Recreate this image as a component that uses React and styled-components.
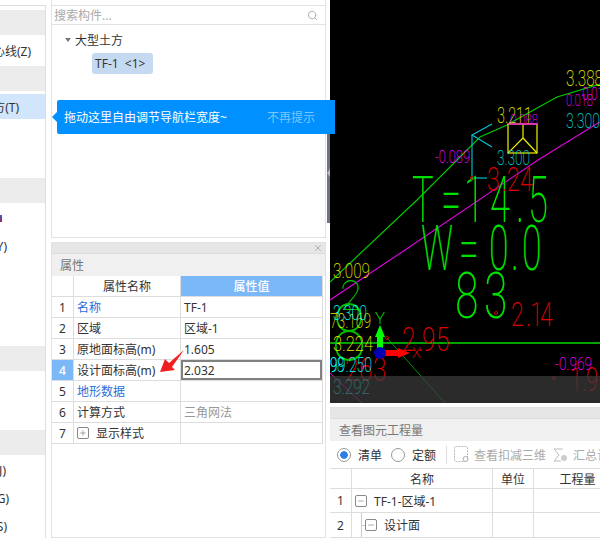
import React from "react";
import styled, { createGlobalStyle } from "styled-components";
import { Search, X, Plus, Minus } from "lucide-react";

const GlobalStyle = createGlobalStyle`
  html, body {
    margin: 0;
    background: #fff;
    overflow: hidden;
  }
  * {
    box-sizing: border-box;
  }
`;

const navRows = [
  { band: true },
  { label: "轴心线(Z)", end: 14 },
  { band: true },
  { label: "大型土方(T)", end: 26, selected: true },
  {},
  {},
  { band: true },
  { mark: true },
  { label: "(Y)", end: 38 },
  {},
  {},
  {},
  { band: true },
  {},
  {},
  { band: true },
  { label: "(J)", end: 39 },
  { label: "(G)", end: 36 },
  { label: "(S)", end: 38 },
];

const propRows = [
  { name: "名称", value: "TF-1", link: true },
  { name: "区域", value: "区域-1" },
  { name: "原地面标高(m)", value: "1.605" },
  { name: "设计面标高(m)", value: "2.032", active: true },
  { name: "地形数据", value: "", link: true },
  { name: "计算方式", value: "三角网法", muted: true },
  { name: "显示样式", value: "", expand: true },
];

// x, baseline y, width, digit height, colour. xs + sx place each character on its own
const cadLabels = [
  { t: "3.388", x: 566, y: 86, w: 37, h: 16, c: "#e6e600" },
  { t: "0.01", x: 582, y: 100, w: 22, h: 13, c: "#ff00ff" },
  { t: "0.018", x: 566, y: 106, w: 27, h: 12, c: "#ff00ff" },
  { t: "3.300", x: 566, y: 128, w: 34, h: 15, c: "#00d8d8" },
  { t: "3.211", x: 497, y: 123, w: 35, h: 16, c: "#e6e600" },
  { t: "0.088", x: 510, y: 125, w: 28, h: 11, c: "#ff00ff" },
  { t: "-0.089", x: 435, y: 163, w: 35, h: 13, c: "#ff00ff" },
  { t: "3.300", x: 497, y: 165, w: 33, h: 15, c: "#00d8d8" },
  { t: "T=14.5", y: 222, h: 46, c: "#00e000", weight: 200, sx: 0.56, xs: [412, 441, 464, 490, 516, 528] },
  { t: "W=0.0", y: 270, h: 45, c: "#00e000", weight: 200, sx: 0.56, xs: [421, 459, 489, 511, 522] },
  { t: "83", y: 318, h: 46, c: "#00e000", weight: 200, sx: 0.66, xs: [455, 484] },
  { t: "3.24", y: 191, h: 24, c: "#e00000", weight: 200, sx: 0.68, xs: [487, 502, 507, 520] },
  { t: "2.14", y: 326, h: 24, c: "#e00000", weight: 200, sx: 0.68, xs: [511, 526, 530, 540] },
  { t: "2.95", y: 351, h: 24, c: "#e00000", weight: 200, sx: 0.72, xs: [402, 418, 422, 436] },
  { t: "263", y: 381, h: 24, c: "#e00000", weight: 200, sx: 0.72, xs: [345, 359, 373] },
  { t: "1.9", y: 391, h: 23, c: "#e00000", weight: 200, sx: 0.68, xs: [570, 582, 586] },
  { t: "-0.969", x: 555, y: 370, w: 37, h: 13, c: "#ff00ff" },
  { t: "3.009", x: 333, y: 278, w: 37, h: 15, c: "#e6e600" },
  { t: "2", x: 340, y: 310, w: 22, h: 30, c: "#00c000", weight: 100 },
  { t: "8", x: 332, y: 360, w: 34, h: 57, c: "#00c000", weight: 100 },
  { t: "73.169", x: 330, y: 328, w: 41, h: 15, c: "#e6e600" },
  { t: "3.300", x: 333, y: 320, w: 34, h: 15, c: "#00ffff" },
  { t: "3.224", x: 333, y: 351, w: 40, h: 15, c: "#e6e600" },
  { t: "98", x: 330, y: 372, w: 14, h: 15, c: "#00ffff" },
  { t: "99.250", x: 330, y: 372, w: 42, h: 15, c: "#00ffff" },
  { t: "3.292", x: 333, y: 394, w: 37, h: 15, c: "#00ffff" },
  { t: "Y", x: 375, y: 324, w: 10, h: 12, c: "#00ff00" },
  { t: "X", x: 412, y: 358, w: 9, h: 10, c: "#ff0000" },
];

function CadLabel({ label }) {
  const { t, x, y, w, h, c, weight, sx, xs } = label;
  if (xs) {
    return (
      <CadText
        transform={`scale(${sx} 1)`}
        x={xs.map((v) => v / sx).join(" ")}
        y={y}
        $size={h / 0.71}
        $weight={weight}
        fill={c}
      >
        {t}
      </CadText>
    );
  }
  return (
    <CadText
      x={x}
      y={y}
      $size={h / 0.71}
      $weight={weight}
      fill={c}
      textLength={w}
      lengthAdjust="spacingAndGlyphs"
    >
      {t}
    </CadText>
  );
}

function CadDrawing() {
  return (
    <CadSvg viewBox="330 0 270 403">
      <polyline points="330,282 417,200 480,137 507,125 530,112 557,97 600,84" fill="none" stroke="#00c800" strokeWidth="1.2" />
      <polyline points="330,300 405,250 538,160 598,123 600,122" fill="none" stroke="#e000e0" strokeWidth="1.1" />
      <line x1="330" y1="373" x2="362" y2="403" stroke="#d000d0" />
      <line x1="387" y1="338" x2="445" y2="403" stroke="#009000" />
      <line x1="330" y1="343" x2="600" y2="343" stroke="#00d800" strokeWidth="1.4" />

      <g fill="none" stroke="#00c8d8" strokeWidth="1.1">
        <polyline points="492,124 472,135 492,147" />
        <line x1="472" y1="135" x2="472" y2="178" />
        <line x1="473" y1="178" x2="487" y2="178" />
      </g>
      <g fill="none" stroke="#f0f000" strokeWidth="1.2">
        <rect x="508" y="124" width="29" height="29" />
        <polyline points="523,124 523,138 508,153" />
        <line x1="523" y1="138" x2="537" y2="153" />
      </g>
      <line x1="508" y1="124" x2="537" y2="124" stroke="#ff00ff" />

      {cadLabels.map((l, i) => (
        <CadLabel key={i} label={l} />
      ))}

      <g fill="none" stroke="#c80000">
        <circle cx="472" cy="178" r="1.5" />
        <circle cx="496" cy="313" r="1.5" />
        <circle cx="387" cy="338" r="1.5" />
        <circle cx="554" cy="378" r="1.5" />
      </g>

      <rect x="377" y="334" width="6" height="14" fill="#00ff00" />
      <polygon points="380,325 385,337 375,337" fill="#00ff00" />
      <rect x="385" y="350" width="15" height="6" fill="#ff0000" />
      <polygon points="410,353 398,348 398,358" fill="#ff0000" />
      <circle cx="380" cy="353" r="6" fill="#0000b0" />
    </CadSvg>
  );
}

function App() {
  return (
    <Page>
      <GlobalStyle />
      <NavColumn>
        <NavList>
          {navRows.map((row, i) => (
            <NavRow key={i} $band={row.band} $selected={row.selected} $end={row.end}>
              {row.mark && <NavMark />}
              {row.label}
            </NavRow>
          ))}
        </NavList>
      </NavColumn>

      <MiddleColumn>
        <ListPanel>
          <SearchRow>
            <SearchHint>搜索构件...</SearchHint>
            <Search size={11} color="#aaa" strokeWidth={2} />
          </SearchRow>
          <TreeHead>
            <Caret />
            大型土方
          </TreeHead>
          <Chip>TF-1 &nbsp;&lt;1&gt;</Chip>
          <Tip>
            <TipArrow />
            <span>拖动这里自由调节导航栏宽度~</span>
            <TipLink>不再提示</TipLink>
          </Tip>
        </ListPanel>

        <PropPanel>
          <PanelStrip>
            <X size={10} color="#aaa" strokeWidth={2} />
          </PanelStrip>
          <PanelTitle>属性</PanelTitle>
          <PropGrid>
            <PropCell />
            <PropCell $center>属性名称</PropCell>
            <PropCell $center $blue>属性值</PropCell>
            {propRows.map((row, i) => (
              <React.Fragment key={row.name}>
                <PropCell $center $blue={row.active}>{i + 1}</PropCell>
                <PropCell $link={row.link}>
                  {row.expand && (
                    <TreeBox>
                      <Plus size={8} strokeWidth={1.5} />
                    </TreeBox>
                  )}
                  {row.name}
                </PropCell>
                <PropCell $muted={row.muted} $active={row.active}>{row.value}</PropCell>
              </React.Fragment>
            ))}
          </PropGrid>
          <RedArrow viewBox="0 0 30 26">
            <polygon points="1,24 6,11 10,15 25,2 13,19 16,22" fill="#f02020" />
          </RedArrow>
        </PropPanel>
      </MiddleColumn>

      <Splitter>
        <SplitHandle />
      </Splitter>

      <RightColumn>
        <CadView>
          <CadDrawing />
          <CadShade />
        </CadView>
        <QtyPanel>
          <PanelStrip />
          <PanelTitle $pad={9}>查看图元工程量</PanelTitle>
          <QtyBar>
            <Radio $on />
            <RadioLabel $after={9}>清单</RadioLabel>
            <Radio />
            <RadioLabel $after={10}>定额</RadioLabel>
            <BarDivider />
            <BarIcon width="15" height="17" viewBox="0 0 15 17">
              <rect x="0.5" y="0.5" width="13" height="15" rx="1" fill="none" stroke="#bbb" strokeDasharray="2 1" />
              <circle cx="11.5" cy="13" r="2.5" fill="#fff" stroke="#aaa" />
            </BarIcon>
            <BarAction>查看扣减三维</BarAction>
            <BarIcon width="15" height="16" viewBox="0 0 15 16">
              <polyline points="10,2 1,2 6,8 1,14 8,14" fill="none" stroke="#bbb" />
              <circle cx="11" cy="11" r="3" fill="#ccc" />
            </BarIcon>
            <BarAction>汇总计算</BarAction>
          </QtyBar>
          <QtyGrid>
            <QtyCell $h={20} />
            <QtyCell $h={20} $center>名称</QtyCell>
            <QtyCell $h={20} $center>单位</QtyCell>
            <QtyCell $h={20} $center>工程量</QtyCell>

            <QtyCell $h={24} $center>1</QtyCell>
            <QtyCell $h={24}>
              <TreeBox>
                <Minus size={8} strokeWidth={1.5} />
              </TreeBox>
              TF-1-区域-1
            </QtyCell>
            <QtyCell $h={24} />
            <QtyCell $h={24} />

            <QtyCell $h={25} $center>2</QtyCell>
            <QtyCell $h={25} $indent>
              <TreeLine />
              <TreeBox>
                <Minus size={8} strokeWidth={1.5} />
              </TreeBox>
              设计面
            </QtyCell>
            <QtyCell $h={25} />
            <QtyCell $h={25} />
          </QtyGrid>
        </QtyPanel>
      </RightColumn>
    </Page>
  );
}

export default App;

const Page = styled.div`
  display: flex;
  width: 600px;
  height: 538px;
  overflow: hidden;
  font-family: "Noto Sans", "Noto Sans CJK SC", sans-serif;
  font-size: 12px;
  color: #333;
`;

const NavColumn = styled.div`
  width: 48px;
  flex: none;
  padding-top: 5px;
  padding-right: 1px;
  border-right: 1px solid transparent;
`;

const NavList = styled.div`
  display: flex;
  flex-direction: column;
  gap: 3px;
  height: 100%;
  padding-top: 4px;
  border-top: 1px solid #ddd;
  border-right: 1px solid #ddd;
  overflow: hidden;
`;

const NavRow = styled.div`
  display: flex;
  align-items: center;
  justify-content: ${({ $end }) => ($end ? "flex-end" : "flex-start")};
  flex: none;
  height: 25px;
  padding-right: ${({ $end }) => $end || 0}px;
  white-space: nowrap;
  overflow: hidden;
  background: ${({ $band, $selected }) =>
    $band ? "#ececec" : $selected ? "#d2e6fb" : "transparent"};
`;

const NavMark = styled.i`
  width: 2px;
  height: 7px;
  background: linear-gradient(#3a5fc0, #a02860);
`;

const MiddleColumn = styled.div`
  display: flex;
  flex-direction: column;
  width: 275px;
  flex: none;
  margin-left: 3px;
`;

const ListPanel = styled.div`
  position: relative;
  height: 238px;
  flex: none;
  padding-top: 5px;
  border: 2px solid #e2e2e2;
  border-width: 0 1px 1px 1px;
`;

const SearchRow = styled.div`
  display: flex;
  align-items: center;
  justify-content: space-between;
  height: 20px;
  padding: 0 7px 0 2px;
  border-top: 1px solid #e2e2e2;
  border-bottom: 1px solid #e2e2e2;
`;

const SearchHint = styled.span`
  color: #aaa;
`;

const TreeHead = styled.div`
  display: flex;
  align-items: center;
  gap: 4px;
  height: 18px;
  margin-top: 6px;
  padding-left: 13px;
`;

const Caret = styled.i`
  width: 0;
  height: 0;
  border-left: 3px solid transparent;
  border-right: 3px solid transparent;
  border-top: 4px solid #777;
`;

const Chip = styled.div`
  display: flex;
  align-items: center;
  width: 61px;
  height: 21px;
  margin: 4px 0 0 40px;
  padding-left: 3px;
  border-radius: 3px;
  background: #c5daf0;
  white-space: nowrap;
`;

const Tip = styled.div`
  position: absolute;
  z-index: 5;
  top: 100px;
  left: 5px;
  display: flex;
  align-items: center;
  justify-content: space-between;
  width: 278px;
  height: 34px;
  padding: 0 20px 0 7px;
  border-radius: 2px 0 0 2px;
  background: #0090ff;
  color: #fff;
`;

const TipArrow = styled.i`
  position: absolute;
  left: -5px;
  top: 12px;
  border-top: 5px solid transparent;
  border-bottom: 5px solid transparent;
  border-right: 5px solid #0090ff;
`;

const TipLink = styled.span`
  color: #7cc6ff;
`;

const PropPanel = styled.div`
  position: relative;
  flex: 1;
  margin-top: 4px;
  border: 1px solid #e2e2e2;
`;

const PanelStrip = styled.div`
  display: flex;
  align-items: center;
  justify-content: flex-end;
  height: 11px;
  padding-right: 2px;
  background: #e6e6e6;
  border-bottom: 1px solid #dcdcdc;
`;

const PanelTitle = styled.div`
  display: flex;
  align-items: center;
  height: 22px;
  padding-left: ${({ $pad }) => $pad || 8}px;
  background: #f0f0f0;
  color: #777;
`;

const PropGrid = styled.div`
  display: grid;
  grid-template-columns: 22px 107px 142px;
  grid-auto-rows: 21px;
`;

const PropCell = styled.div`
  display: flex;
  align-items: center;
  justify-content: ${({ $center }) => ($center ? "center" : "flex-start")};
  padding: 0 ${({ $center }) => ($center ? 0 : 3)}px;
  border-right: 1px solid #ddd;
  border-bottom: 1px solid #ddd;
  white-space: nowrap;
  color: ${({ $link, $muted, $blue }) =>
    $blue ? "#fff" : $link ? "#2a6fdb" : $muted ? "#999" : "#333"};
  background: ${({ $blue }) => ($blue ? "#7ab8f8" : "transparent")};
  font-weight: ${({ $blue }) => ($blue ? 500 : 400)};
  ${({ $active }) => $active && "box-shadow: inset 0 0 0 2px #808080;"}
`;

const TreeBox = styled.span`
  display: inline-flex;
  align-items: center;
  justify-content: center;
  width: 12px;
  height: 12px;
  margin-right: 7px;
  border: 1px solid #888;
  border-radius: 2px;
  background: #fff;
  color: #555;
  flex: none;
`;

const RedArrow = styled.svg`
  position: absolute;
  left: 107px;
  top: 105px;
  width: 30px;
  height: 26px;
`;

const Splitter = styled.div`
  width: 3px;
  flex: none;
  padding-top: 123px;
  margin-left: 1px;
`;

const SplitHandle = styled.div`
  position: relative;
  height: 100px;
  background: #6b7480;
  &::after {
    content: "";
    position: absolute;
    right: 0;
    top: 46px;
    border-top: 4px solid transparent;
    border-bottom: 4px solid transparent;
    border-right: 3px solid #b4b9be;
  }
`;

const RightColumn = styled.div`
  display: flex;
  flex-direction: column;
  width: 270px;
  flex: none;
`;

const CadView = styled.div`
  position: relative;
  height: 403px;
  flex: none;
  background: #000;
  overflow: hidden;
`;

const CadSvg = styled.svg`
  display: block;
  width: 270px;
  height: 403px;
`;

const CadText = styled.text`
  font-family: Roboto, "Liberation Sans", sans-serif;
  font-size: ${({ $size }) => $size}px;
  font-weight: ${({ $weight }) => $weight || 200};
`;

const CadShade = styled.div`
  position: absolute;
  left: 0;
  right: 0;
  bottom: 0;
  height: 27px;
  background: rgba(60, 60, 60, 0.72);
`;

const QtyPanel = styled.div`
  margin-top: 4px;
  border-top: 1px solid #e2e2e2;
`;

const QtyBar = styled.div`
  display: flex;
  align-items: center;
  height: 27px;
  padding-left: 7px;
  white-space: nowrap;
  overflow: hidden;
`;

const Radio = styled.i`
  width: 14px;
  height: 14px;
  flex: none;
  border: 1px solid #999;
  border-radius: 50%;
  background: ${({ $on }) =>
    $on ? "radial-gradient(circle, #2a7fe8 0 3.5px, #fff 4px)" : "#fff"};
`;

const RadioLabel = styled.span`
  flex: none;
  margin: 0 ${({ $after }) => $after}px 0 7px;
`;

const BarDivider = styled.i`
  width: 1px;
  height: 18px;
  flex: none;
  margin-right: 7px;
  background: #ddd;
`;

const BarIcon = styled.svg`
  flex: none;
`;

const BarAction = styled.span`
  flex: none;
  margin: 0 7px 0 5px;
  color: #aaa;
`;

const QtyGrid = styled.div`
  display: grid;
  grid-template-columns: 22px 141px 41px 88px;
  border-top: 1px solid #ddd;
`;

const QtyCell = styled.div`
  position: relative;
  display: flex;
  align-items: center;
  justify-content: ${({ $center }) => ($center ? "center" : "flex-start")};
  height: ${({ $h }) => $h}px;
  padding-left: ${({ $center, $indent }) => ($center ? 0 : $indent ? 13 : 3)}px;
  border-right: 1px solid #ddd;
  border-bottom: 1px solid #ddd;
  white-space: nowrap;
`;

const TreeLine = styled.i`
  position: absolute;
  left: 9px;
  top: 0;
  bottom: 0;
  width: 4px;
  border-left: 1px solid #ccc;
  &::after {
    content: "";
    position: absolute;
    left: 0;
    right: 0;
    top: 12px;
    border-top: 1px solid #ccc;
  }
`;
